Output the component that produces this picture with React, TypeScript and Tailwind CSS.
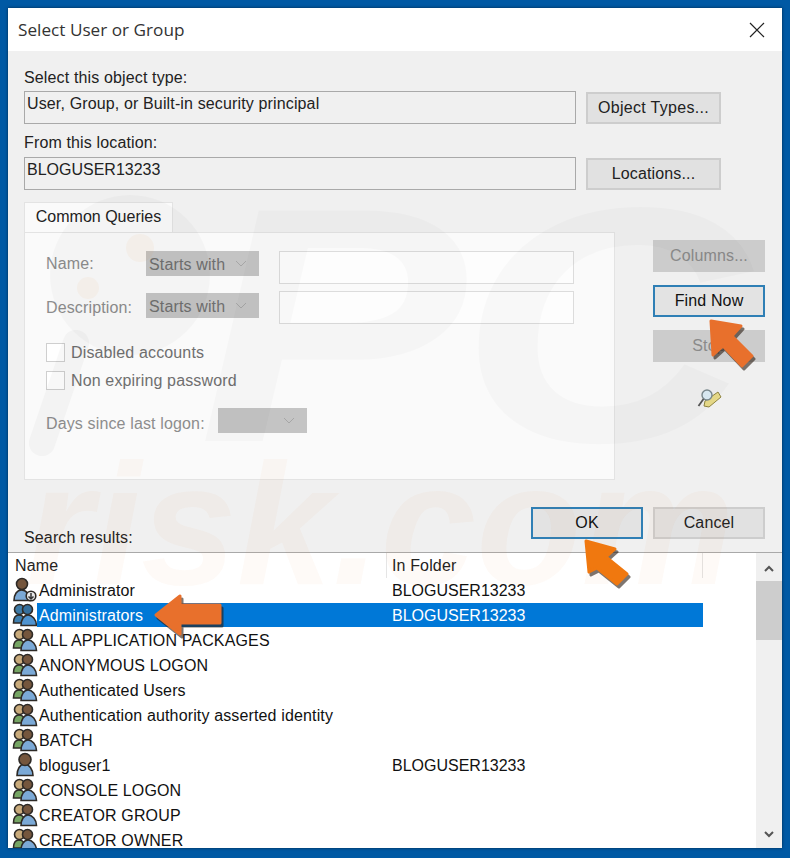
import React from "react";

const font = "font-['Liberation_Sans',Arial,sans-serif]";

function GroupIcon({ tint = false }: { tint?: boolean }) {
  return (
    <svg width="26" height="25" viewBox="0 0 26 25" className="shrink-0">
      <g stroke="#2e2a26" strokeWidth="1.600">
        <path d="M1.500 21c0-5 2-8 5.500-8s5 2 6 5v3z" fill={tint ? "#3f7fae" : "#76a564"} />
        <circle cx="7.500" cy="7.500" r="5" fill={tint ? "#3f7ba6" : "#c9ab7c"} />
        <circle cx="15.500" cy="7.500" r="5" fill={tint ? "#356f9c" : "#75563d"} />
        <path d="M9 23.500c0-6 3-10.500 7-10.500s8.500 4.500 8.500 10.500z" fill={tint ? "#4f93cf" : "#7ba9d6"} />
      </g>
    </svg>
  );
}

function AdminIcon() {
  return (
    <svg width="26" height="25" viewBox="0 0 26 25" className="shrink-0">
      <g stroke="#2e2a26" strokeWidth="1.600">
        <path d="M2 23.500c0-6 3-10.500 7.500-10.500s8.500 4.500 8.500 10.500z" fill="#7ba9d6" />
        <circle cx="10" cy="7" r="5.500" fill="#75563d" />
        <circle cx="19" cy="19" r="4.800" fill="#e8e8e8" />
      </g>
      <path d="M19 16v5.500M16.500 19.500l2.500 2.500 2.500-2.500" stroke="#333" strokeWidth="1.500" fill="none" />
    </svg>
  );
}

function UserIcon() {
  return (
    <svg width="26" height="25" viewBox="0 0 26 25" className="shrink-0">
      <g stroke="#2e2a26" strokeWidth="1.600">
        <path d="M5 23.500c0-6 3-11.500 7.500-11.500s8.500 5.500 8.500 11.500z" fill="#7ba9d6" />
        <circle cx="13" cy="7.500" r="6" fill="#75563d" />
      </g>
    </svg>
  );
}

type Row = { name: string; folder?: string; icon: "group" | "admin" | "user"; selected?: boolean };

const rows: Row[] = [
  { name: "Administrator", folder: "BLOGUSER13233", icon: "admin" },
  { name: "Administrators", folder: "BLOGUSER13233", icon: "group", selected: true },
  { name: "ALL APPLICATION PACKAGES", icon: "group" },
  { name: "ANONYMOUS LOGON", icon: "group" },
  { name: "Authenticated Users", icon: "group" },
  { name: "Authentication authority asserted identity", icon: "group" },
  { name: "BATCH", icon: "group" },
  { name: "bloguser1", folder: "BLOGUSER13233", icon: "user" },
  { name: "CONSOLE LOGON", icon: "group" },
  { name: "CREATOR GROUP", icon: "group" },
  { name: "CREATOR OWNER", icon: "group" },
];

function ResultRow({ row }: { row: Row }) {
  return (
    <div className="flex h-[25px] items-center">
      <div className="flex w-[28px] shrink-0 justify-start pl-[3px]">
        {row.icon === "admin" ? <AdminIcon /> : row.icon === "user" ? <UserIcon /> : <GroupIcon tint={row.selected} />}
      </div>
      <div className={`flex h-[24px] flex-1 items-center pt-[2px] ${row.selected ? "bg-[#0078d7] text-white" : "text-[#111]"}`}>
        <span className="w-[355px] shrink-0 pl-[2px] whitespace-nowrap">{row.name}</span>
        <span className="tracking-normal">{row.folder}</span>
      </div>
    </div>
  );
}

function WinButton({ label, className = "", state = "normal" }: { label: string; className?: string; state?: "normal" | "focus" | "disabled" }) {
  const look =
    state === "focus"
      ? "border-2 border-[#2f7fb5] bg-[#e3e3e3] text-[#111]"
      : state === "disabled"
        ? "bg-[#cccccc] text-[#8a8a8a]"
        : "border-2 border-[#cdcdcd] bg-[#e1e1e1] text-[#222]";
  return <div className={`flex items-center justify-center ${look} ${className}`}>{label}</div>;
}

function Chevron({ className = "" }: { className?: string }) {
  return (
    <svg width="14" height="8" viewBox="0 0 14 8" className={className}>
      <path d="M2 1l5 5 5-5" fill="none" stroke="#a6a6a6" strokeWidth="1" />
    </svg>
  );
}

function DisabledSelect({ label, className = "" }: { label?: string; className?: string }) {
  return (
    <div className={`flex h-[25px] items-center justify-between bg-[#c4c4c4] pl-[3px] pr-[11px] text-[#6f6f6f] ${className}`}>
      <span className="pt-[2px]">{label}</span>
      <Chevron />
    </div>
  );
}

// points are given in the box's own coordinates
function Arrow({ className, points, fill }: { className: string; points: string; fill: string }) {
  return (
    <svg width="80" height="70" viewBox="0 0 80 70" className={`pointer-events-none absolute ${className}`}>
      <polygon points={points} fill="#2a1c12" opacity="0.6" stroke="#2a1c12" strokeWidth="3" strokeLinejoin="round" transform="translate(2 3)" />
      <polygon points={points} fill={fill} stroke={fill} strokeWidth="3" strokeLinejoin="round" />
    </svg>
  );
}

function Watermark() {
  return (
    <div className="pointer-events-none absolute inset-0 overflow-hidden">
      <svg width="774" height="840" viewBox="0 0 774 840" className="absolute left-0 top-0">
        <circle cx="122" cy="267" r="80" fill="#000" opacity="0.022" />
        <path d="M68 335L34 435" stroke="#000" strokeWidth="26" strokeLinecap="round" opacity="0.022" />
        <circle cx="132" cy="240" r="14" fill="#f08030" opacity="0.05" />
        <circle cx="80" cy="280" r="11" fill="#f08030" opacity="0.05" />
      </svg>
      <span className="absolute left-[190px] top-[150px] origin-top-left scale-x-[1.2] text-[335px] leading-none font-bold tracking-[-6px] whitespace-nowrap text-black/[.02] italic">PC</span>
      <span className="absolute left-[18px] top-[430px] text-[172px] leading-none font-bold whitespace-nowrap text-[#f07020]/[.035] italic">risk.com</span>
    </div>
  );
}

export default function App() {
  return (
    <div className={`h-[858px] w-[790px] overflow-hidden bg-[#0059a4] p-2 text-[16px] leading-none tracking-[0.14px] ${font}`}>
      <div className="relative flex h-[840px] w-[774px] flex-col overflow-hidden bg-[#f0f0f0] shadow-[0_0_3px_#00000088]">
        {/* Title bar */}
        <div className="flex h-[43px] shrink-0 items-center justify-between bg-white pl-[10px] pr-[17px]">
          <span className="font-['Open_Sans',sans-serif] text-[17.200px] tracking-normal text-[#333]">Select User or Group</span>
          <svg width="16" height="16" viewBox="0 0 16 16">
            <path d="M1 1l14 14M15 1L1 15" stroke="#222" strokeWidth="1.200" />
          </svg>
        </div>

        <div className="flex h-[501px] shrink-0 flex-col pl-[16px] pr-[17px] pt-[19px]">
          {/* Object type + location */}
          <div className="text-[#222]">Select this object type:</div>
          <div className="mt-[5px] flex items-center gap-[10px]">
            <div className="h-[33px] w-[552px] border border-[#a9a9a9] pl-[2px] pt-[4px] text-[#222]">User, Group, or Built-in security principal</div>
            <WinButton label="Object Types..." className="h-[32px] w-[135px] tracking-[0.3px]" />
          </div>
          <div className="mt-[11px] text-[#222]">From this location:</div>
          <div className="mt-[6px] flex items-center gap-[10px]">
            <div className="h-[33px] w-[552px] border border-[#a9a9a9] pl-[2px] pt-[4px] tracking-normal text-[#222]">BLOGUSER13233</div>
            <WinButton label="Locations..." className="h-[32px] w-[135px]" />
          </div>

          {/* Common queries */}
          <div className="mt-[12px] flex gap-[38px]">
            <div className="w-[591px]">
              <div className="flex h-[30px] w-[149px] items-center justify-center border border-b-0 border-[#e3e3e3] bg-[#fafafa] pb-[2px] tracking-normal text-[#222]">Common Queries</div>
              <div className="h-[248px] border border-[#e3e3e3] bg-[#fafafa] pl-[21px] pt-[18px] text-[#8d8d8d]">
                <div className="flex h-[33px] items-start">
                  <span className="w-[100px] pt-[5px]">Name:</span>
                  <DisabledSelect label="Starts with" className="w-[113px]" />
                  <div className="ml-[20px] h-[33px] w-[295px] border border-[#dcdcdc] bg-white/60" />
                </div>
                <div className="mt-[7px] flex h-[33px] items-start">
                  <span className="w-[100px] pt-[9px]">Description:</span>
                  <DisabledSelect label="Starts with" className="mt-[2px] w-[113px]" />
                  <div className="ml-[20px] h-[33px] w-[295px] border border-[#dcdcdc] bg-white/60" />
                </div>
                <div className="mt-[19px] flex h-[19px] items-center gap-[6px] text-[#6f6f6f]">
                  <div className="h-[19px] w-[19px] border border-[#cfcfcf] bg-white" />
                  Disabled accounts
                </div>
                <div className="mt-[9px] flex h-[19px] items-center gap-[6px] text-[#6f6f6f]">
                  <div className="h-[19px] w-[19px] border border-[#cfcfcf] bg-white" />
                  Non expiring password
                </div>
                <div className="mt-[18px] flex h-[25px] items-center">
                  <span className="w-[172px] pt-[6px]">Days since last logon:</span>
                  <DisabledSelect className="w-[89px]" />
                </div>
              </div>
            </div>

            {/* Side buttons */}
            <div className="flex w-[112px] flex-col pt-[38px]">
              <WinButton label="Columns..." state="disabled" className="h-[32px]" />
              <WinButton label="Find Now" state="focus" className="mt-[13px] h-[32px]" />
              <WinButton label="Stop" state="disabled" className="mt-[13px] h-[32px]" />
              <svg width="26" height="22" viewBox="0 0 26 22" className="mt-[26px] self-center">
                <path d="M9 13l13-9 3 5-12 10-5-1z" fill="#e9dc8a" stroke="#8f8440" strokeWidth="1" />
                <circle cx="11" cy="7" r="5" fill="#dcecf5" stroke="#7b8a8f" strokeWidth="1.400" />
                <path d="M7.500 11l-5 7" stroke="#555" strokeWidth="1.800" />
              </svg>
            </div>
          </div>
        </div>

        {/* Search results */}
        <div className="flex h-[0px] shrink-0 items-end pl-[16px]">
          <span className="pb-[6px] text-[#222]">Search results:</span>
        </div>
        <div className="relative flex min-h-0 flex-1 border-t border-[#a9a9a9] bg-white">
          <div className="min-w-0 flex-1 overflow-hidden pl-[1px]">
            <div className="flex h-[24px] w-[694px] items-center text-[#222]">
              <span className="w-[378px] shrink-0 border-r border-[#e5e5e5] pl-[6px] pt-[1px] leading-[24px]">Name</span>
              <span className="flex-1 border-r border-[#e5e5e5] pl-[5px] pt-[1px] leading-[24px]">In Folder</span>
            </div>
            <div className="w-[694px]">
              {rows.map((row) => (
                <ResultRow key={row.name} row={row} />
              ))}
            </div>
          </div>
          <div className="flex w-[26px] shrink-0 flex-col items-center justify-between bg-[#f0f0f0]">
            <div className="flex w-full flex-col items-center">
              <svg width="12" height="8" viewBox="0 0 12 8" className="mt-[12px]">
                <path d="M2 6l4-4 4 4" fill="none" stroke="#555" strokeWidth="2" />
              </svg>
              <div className="mt-[8px] h-[59px] w-full bg-[#cdcdcd]" />
            </div>
            <svg width="12" height="8" viewBox="0 0 12 8" className="mb-[10px]">
              <path d="M2 2l4 4 4-4" fill="none" stroke="#555" strokeWidth="2" />
            </svg>
          </div>
        </div>

        <WinButton label="OK" state="focus" className="absolute left-[523px] top-[499px] h-[32px] w-[112px]" />
        <WinButton label="Cancel" className="absolute left-[645px] top-[499px] h-[32px] w-[112px]" />

        <Watermark />

        {/* Orange arrows */}
        <Arrow className="left-[140px] top-[577px]" fill="#e8702c" points="8,30 32,11 32,20 72,20 72,38 32,38 32,49" />
        <Arrow className="left-[692px] top-[304px]" fill="#e8702c" points="11,9 41,14 32,24 52,44 42,54 23,34 13,43" />
        <Arrow className="left-[567px] top-[524px]" fill="#f0780f" points="11,9 40,17 31,25 52,42 42,52 22,36 14,40" />
      </div>
    </div>
  );
}
